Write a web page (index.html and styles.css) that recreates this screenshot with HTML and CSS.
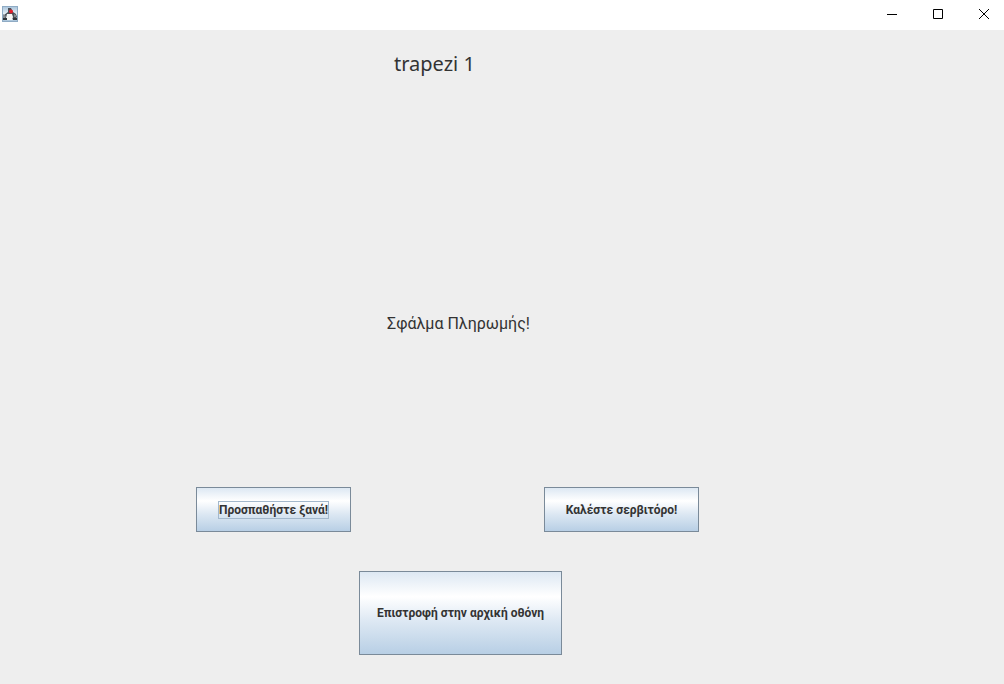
FILE: index.html
```html
<!DOCTYPE html>
<html lang="el">
<head>
<meta charset="utf-8">
<title>trapezi 1</title>
<link rel="stylesheet" href="styles.css">
</head>
<body>
<div class="window">
  <header class="titlebar">
    <svg class="app-icon" viewBox="0 0 16 16" aria-hidden="true">
      <defs><linearGradient id="sky" x2="0" y2="1"><stop stop-color="#a9c4dc"/><stop offset=".5" stop-color="#e8f0f6"/><stop offset="1" stop-color="#a4c0d8"/></linearGradient></defs>
      <rect x=".5" y=".5" width="15" height="15" fill="url(#sky)" stroke="#8fabc4"/>
      <path d="M6 2h3l2 4 3 2 1 3-2 2H2V9l4-3z" fill="#4a4f56"/>
      <path d="M5 8h5l1 3-1 3H5l-1-2z" fill="#f5f5f4"/>
      <path d="M1 8l3 2-1 2H1zM12 8l2 1v2h-2z" fill="#85898f"/>
      <path d="M1 12h4v2H1zM11 12h4v2h-4z" fill="#303338"/>
      <circle cx="9" cy="5.500" r="2" fill="#e3202c"/>
    </svg>
    <div class="window-controls">
      <button class="window-button" aria-label="Minimize"><svg viewBox="0 0 10 10"><path d="M0 5.500h10"/></svg></button>
      <button class="window-button" aria-label="Maximize"><svg viewBox="0 0 10 10"><path d="M.5.5h9v9h-9z"/></svg></button>
      <button class="window-button" aria-label="Close"><svg viewBox="0 0 10 10"><path d="M0 0l10 10M10 0 0 10"/></svg></button>
    </div>
  </header>
  <main class="content">
    <h1 class="table-name">trapezi 1</h1>
    <p class="message">Σφάλμα Πληρωμής!</p>
    <div class="actions">
      <button class="action"><span class="focus-ring">Προσπαθήστε ξανά!</span></button>
      <button class="action">Καλέστε σερβιτόρο!</button>
    </div>
    <button class="action action-home">Επιστροφή στην αρχική οθόνη</button>
  </main>
</div>
</body>
</html>
```
FILE: styles.css
```css
* { box-sizing: border-box; }
body {
  margin: 0;
  background: #eeeeee;
  color: #333333;
  font-family: Roboto, "Noto Sans", sans-serif;
}
.window {
  min-height: 100vh;
  display: flex;
  flex-direction: column;
}
.titlebar {
  height: 30px;
  display: flex;
  align-items: center;
  justify-content: space-between;
  padding-left: 2px;
  background: #ffffff;
}
.app-icon { width: 16px; height: 16px; margin-bottom: 2px; }
.window-controls {
  display: flex;
  align-self: stretch;
  gap: 6px;
  padding-bottom: 2px;
}
.window-button {
  width: 40px;
  padding: 0;
  border: 0;
  background: transparent;
  display: flex;
  align-items: center;
  justify-content: center;
}
.window-button svg {
  width: 10px;
  height: 10px;
  fill: none;
  stroke: #000000;
  overflow: visible;
}
.content {
  display: flex;
  flex-direction: column;
  align-items: flex-start;
  padding: 20px 0 28px 196px;
}
.table-name {
  margin: 0 0 0 198px;
  font-family: "Noto Sans", sans-serif;
  font-size: 20px;
  line-height: 28px;
  font-weight: 400;
}
.message {
  margin: 232px 0 0 191px;
  font-size: 16px;
  line-height: 28px;
}
.actions {
  display: flex;
  gap: 193px;
  margin-top: 149px;
}
.action {
  width: 155px;
  height: 45px;
  padding: 0;
  border: 1px solid #7a8a99;
  border-radius: 0;
  background: linear-gradient(#dde8f3, #ffffff 30%, #dde8f3 60%, #b8cfe5);
  color: #333333;
  font-family: inherit;
  font-size: 12px;
  font-weight: 700;
  line-height: 16px;
  white-space: nowrap;
}
.focus-ring {
  display: inline-block;
  border: 1px solid #a3b8cc;
}
.action-home {
  width: 203px;
  height: 84px;
  margin: 39px 0 0 163px;
}
```
